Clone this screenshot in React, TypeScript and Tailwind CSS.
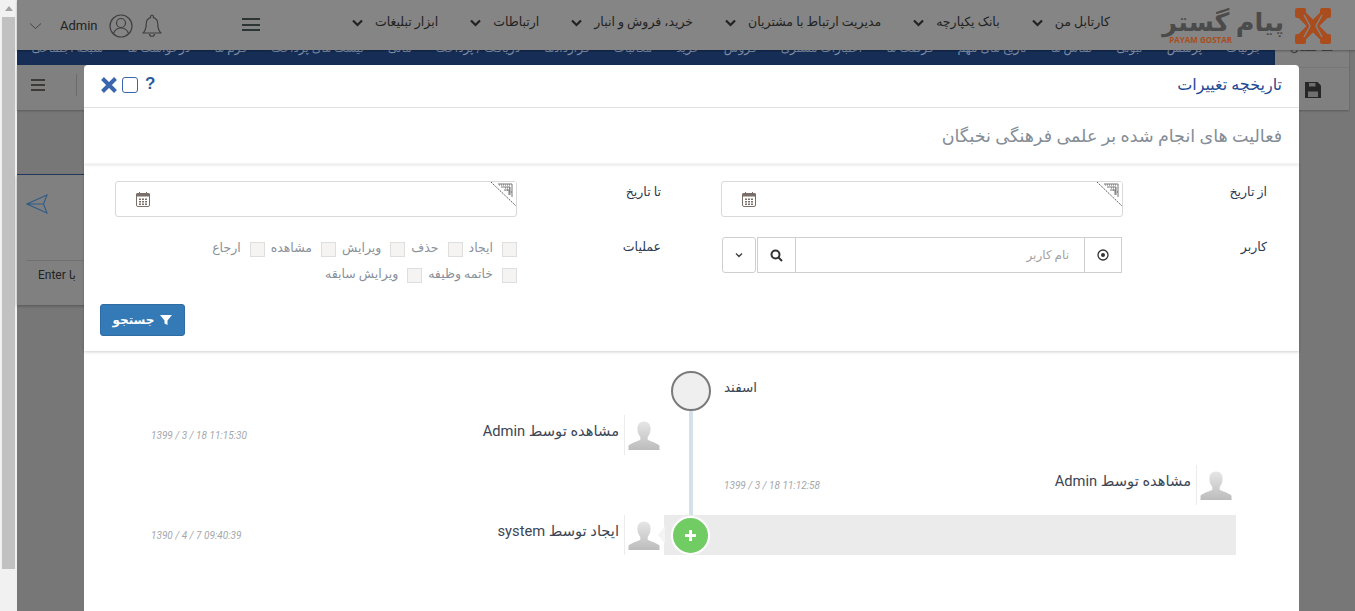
import React from "react";

const Chevron = ({ className = "" }: { className?: string }) => (
  <svg width="11" height="8" viewBox="0 0 11 8" className={className} fill="none" stroke="#222" strokeWidth="2.2">
    <path d="M1 1.500 5.500 6 10 1.500" />
  </svg>
);

const Logo = () => (
  <div className="flex items-start w-[172px] h-[40px] mr-[21px] mt-[5px] shrink-0">
    <div className="flex flex-col items-end w-[122px] leading-none text-[#4b4b4b]">
      <span dir="rtl" className="font-bold text-[25.5px] leading-[28px] whitespace-nowrap">پیام گستر</span>
      <span className="text-[#a94d1f] font-bold text-[8px] leading-[9px] mr-[52px] -mt-[1px] font-['Open_Sans',sans-serif] whitespace-nowrap">PAYAM GOSTAR</span>
    </div>
    <svg width="36" height="36" viewBox="0 0 36 36" className="ml-[11px]" fill="none">
      <path d="M5 5 31 31M31 5 5 31" stroke="#a94d1f" strokeWidth="9" />
      <rect x="0" y="0" width="11" height="10" rx="2" fill="#a94d1f" />
      <rect x="25" y="0" width="11" height="10" rx="2" fill="#a94d1f" />
      <rect x="0" y="26" width="11" height="10" rx="2" fill="#a94d1f" />
      <rect x="25" y="26" width="11" height="10" rx="2" fill="#a94d1f" />
      <path d="M9 7 15 18 9 29M27 7 21 18 27 29" stroke="#858585" strokeWidth="1.400" />
    </svg>
  </div>
);

const Header = () => (
  <header className="h-[50px] flex items-center bg-[#858585] relative z-10 shadow-[0_1px_2px_rgba(0,0,0,0.3)]">
    <div className="flex items-center w-[145px] pl-[12px] pt-[1px] shrink-0">
      <svg width="13" height="8" viewBox="0 0 13 8" fill="none" stroke="#444" strokeWidth="1">
        <path d="M1 1.500 6.500 6.500 12 1.500" />
      </svg>
      <span className="ml-[18px] text-[13px] text-[#222] w-[49px]">Admin</span>
      <svg width="24" height="26" viewBox="0 0 24 26" fill="none" stroke="#3f3f3f" strokeWidth="1.200">
        <circle cx="12" cy="13" r="11" />
        <circle cx="12" cy="10" r="4.500" />
        <path d="M4.500 20.500c1.500-4 4.500-5.500 7.500-5.500s6 1.500 7.500 5.500" />
      </svg>
      <svg width="20" height="26" viewBox="0 0 20 26" className="ml-[9px]" fill="none" stroke="#3f3f3f" strokeWidth="1.200">
        <path d="M10 2c.9 0 1.400.6 1.400 1.400v1.200c3 .8 4.400 3.300 4.400 6.400 0 4.500.8 6.500 3 9H1.200c2.200-2.500 3-4.500 3-9 0-3.100 1.400-5.600 4.400-6.400V3.400C8.600 2.600 9.100 2 10 2Z" />
        <path d="M7.500 21c0 3 5 3 5 0" />
      </svg>
    </div>
    <div className="w-[18px] ml-[80px] flex flex-col gap-[3.5px] -mt-[1px] shrink-0">
      <span className="h-[2px] bg-[#2c3533]" /><span className="h-[2px] bg-[#2c3533]" /><span className="h-[2px] bg-[#2c3533]" />
    </div>
    <nav className="flex-1 flex justify-end items-center gap-[32px] -mt-[5px] text-[#222] text-[12.5px] pr-[52px]">
      {["ابزار تبلیغات", "ارتباطات", "خرید، فروش و انبار", "مدیریت ارتباط با مشتریان", "بانک یکپارچه", "کارتابل من"].map((t) => (
        <div key={t} className="flex items-center gap-[12px] whitespace-nowrap">
          <Chevron />
          <span dir="rtl">{t}</span>
        </div>
      ))}
    </nav>
    <Logo />
  </header>
);

const BlueTabs = () => (
  <div className="h-[15px] overflow-hidden bg-[#162d55] flex justify-end pr-[13px]" dir="ltr">
    <div dir="rtl" className="flex gap-[24px] -mt-[11px] text-[12px] text-[#7f8ea8] whitespace-nowrap">
      {["جزئیات", "پرسش", "ثبوتی", "تماس ها", "تاریخ های مهم", "فرصت ها", "اعتبارات مشتری", "فروش", "خرید", "مکاتبات", "قراردادها", "دریافت / پرداخت", "مالی", "لیست های پرداخت", "فرم ها", "درخواست ها", "شبکه اجتماعی"].map((t) => (
        <span key={t}>{t}</span>
      ))}
    </div>
  </div>
);

const BackPage = () => (
  <div className="flex-1 flex min-h-0 bg-[#777]">
    <div className="flex-1 flex flex-col min-w-0">
      <BlueTabs />
      <div className="h-[45px] bg-[#808080] shadow-[0_1px_2px_rgba(0,0,0,0.25)] flex items-center pl-[14px]">
        <div className="w-[14px] flex flex-col gap-[3px] mb-[5px]">
          <span className="h-[2px] bg-[#3d3a38]" /><span className="h-[2px] bg-[#3d3a38]" /><span className="h-[2px] bg-[#3d3a38]" />
        </div>
        <span className="ml-[31px] w-px h-[22px] bg-[#6a6a6a] mb-[5px]" />
      </div>
      <div className="h-[65px] border-b border-[#233a60]" />
      <div className="h-[130px] bg-[#808080] shadow-[0_1px_3px_rgba(0,0,0,0.3)] pl-[9px]">
        <svg width="22" height="22" viewBox="0 0 22 22" className="mt-[18px]" fill="none" stroke="#2f5c87" strokeWidth="1.100">
          <path d="M21 2 1 11l20 9-3.500-9ZM1 11h16.500" />
        </svg>
        <div className="mt-[45px] border-t border-[#717171] pt-[5px] pl-[12px] text-[12px] text-[#222] whitespace-nowrap">Enter <span dir="rtl">با</span></div>
      </div>
    </div>
    <div className="w-[80px] pr-[6px]">
      <div className="h-[60px] bg-[#808080] shadow-[0_1px_2px_rgba(0,0,0,0.25)]">
        <div className="h-[18px] border-b border-[#767676] overflow-hidden flex justify-center">
          <span dir="rtl" className="-mt-[12px] text-[12px] text-[#444] whitespace-nowrap">ساختمان</span>
        </div>
        <svg width="16" height="16" viewBox="0 0 16 16" className="ml-[30px] mt-[14px]" fill="#262626">
          <path d="M0 0h12.500L16 3.500V16H0Z" />
          <path d="M3 9.500h10V15H3ZM4 1h6.500v3.500H4Z" fill="#6f6f6f" />
        </svg>
      </div>
    </div>
  </div>
);

const CalendarIcon = () => (
  <svg width="14" height="15" viewBox="0 0 14 15" fill="none">
    <rect x="0.500" y="1.500" width="13" height="13" rx="1.500" stroke="#7a6e69" />
    <rect x="0" y="1.500" width="14" height="3" fill="#7a6e69" />
    <path d="M3.500 0v3M10.500 0v3" stroke="#7a6e69" />
    <path d="M3 6.500h2v1.500H3zM6 6.500h2v1.500H6zM9 6.500h2v1.500H9zM3 9h2v1.500H3zM6 9h2v1.500H6zM9 9h2v1.500H9zM3 11.500h2V13H3zM6 11.500h2V13H6zM9 11.500h2V13H9z" fill="#7a6e69" />
  </svg>
);

const DateInput = () => (
  <div className="relative w-[402px] h-[36px] border border-[#d9d9d9] rounded-[3px] flex items-center pl-[20px] bg-white shrink-0">
    <CalendarIcon />
    <svg width="25" height="24" viewBox="0 0 25 24" className="absolute top-0 right-0" fill="none">
      <path d="M0 0h25v24Z" fill="#fff" />
      <path d="M0 0 25 24" stroke="#222" strokeWidth="0.800" strokeDasharray="1.500 1" />
      <path d="M7 2h14v13M10 5h9v8M13 8h5v5" stroke="#777" strokeWidth="1" />
      <path d="M8 3h12M14 6h6M16 8h4M18 10h3" stroke="#666" strokeWidth="1" strokeDasharray="1 1" />
    </svg>
  </div>
);

const Check = ({ label }: { label: string }) => (
  <label className="flex items-center gap-[9px] whitespace-nowrap h-[15px]">
    <span className="w-[15px] h-[15px] border border-[#dedede] bg-[#f6f3f3] shrink-0" />
    <span className="-mt-[3px]">{label}</span>
  </label>
);

const Avatar = () => (
  <svg width="32" height="33" viewBox="0 0 33 33" className="shrink-0">
    <defs>
      <linearGradient id="av" x1="0" y1="0" x2="0" y2="1">
        <stop offset="0" stopColor="#e6e6e6" />
        <stop offset="1" stopColor="#bcbcbc" />
      </linearGradient>
    </defs>
    <path d="M16.500 2c4.500 0 6.800 3 6.800 7.500 0 3.500-1.300 6.500-3 8.500v3c2 1.500 9 3 12.200 6v4.500H.500V27c3.200-3 10.200-4.500 12.200-6v-3c-1.700-2-3-5-3-8.500C9.700 5 12 2 16.500 2Z" fill="url(#av)" />
  </svg>
);

const Event = ({ text, time, side }: { text: string; time: string; side: "left" | "right" }) => (
  <div className={`h-[40px] flex items-center justify-between ${side === "left" ? "pl-[67px] pr-[31px]" : "pl-[33px] pr-[67px]"}`}>
    <span className="text-[10px] italic text-[#a3a8ae] font-['Roboto',sans-serif] whitespace-nowrap">{time}</span>
    <div className="flex items-center h-full">
      <span dir="rtl" className="text-[14.7px] text-[#3c4654] -mt-[7px] whitespace-nowrap">{text}</span>
      <span className="w-px h-full bg-[#ececec] ml-[5px] mr-[3px]" />
      <Avatar />
    </div>
  </div>
);

const Modal = () => (
  <div className="absolute left-[84px] top-[65px] w-[1215px] h-[546px] bg-white rounded-t-[4px] flex flex-col z-20">
    <div className="h-[43px] shrink-0 border-b border-[#e5e5e5] flex items-center justify-between pl-[16px] pr-[17px]">
      <div className="flex items-center -mt-[2px]">
        <svg width="18" height="18" viewBox="0 0 18 18" stroke="#3a66ad" strokeWidth="4" fill="none">
          <path d="M2.500 2.500 15.500 15.500M15.500 2.500 2.500 15.500" />
        </svg>
        <span className="ml-[4px] w-[16px] h-[16px] border-[1.5px] border-[#3a66ad] rounded-[3px]" />
        <span className="ml-[7px] -mt-[2px] text-[#2b5a9f] font-bold text-[17px] font-['Liberation_Sans',sans-serif]">?</span>
      </div>
      <span dir="rtl" className="text-[16px] text-[#1f4b93] -mt-[3px]">تاریخچه تغییرات</span>
    </div>
    <div className="h-[56px] shrink-0 flex items-center justify-end pr-[17px] shadow-[0_1px_3px_rgba(0,0,0,0.12)]">
      <span dir="rtl" className="text-[17.5px] text-[#858d96] mt-[1px]">فعالیت های انجام شده بر علمی فرهنگی نخبگان</span>
    </div>
    <div className="h-[187px] shrink-0 shadow-[0_1px_3px_rgba(0,0,0,0.2)] relative pt-[17px]">
      <div className="flex">
        <div className="w-[607px] flex pl-[31px] pr-[30px]">
          <DateInput />
          <div dir="rtl" className="flex-1 text-[12.5px] text-[#2a3a52] pt-[2px]">تا تاریخ</div>
        </div>
        <div className="flex-1 flex pl-[30px] pr-[32px]">
          <DateInput />
          <div dir="rtl" className="flex-1 text-[12.5px] text-[#2a3a52] pt-[2px]">از تاریخ</div>
        </div>
      </div>
      <div className="flex mt-[20px]">
        <div className="w-[607px] flex pl-[31px] pr-[30px]">
          <div dir="rtl" className="w-[402px] shrink-0 flex flex-col gap-[11px] pt-[5px] text-[12.5px] text-[#8a919a]">
            <div className="flex gap-[6px]">
              {["ایجاد", "حذف", "ویرایش", "مشاهده", "ارجاع"].map((l) => <Check key={l} label={l} />)}
            </div>
            <div className="flex gap-[6px]">
              {["خاتمه وظیفه", "ویرایش سابقه"].map((l) => <Check key={l} label={l} />)}
            </div>
          </div>
          <div dir="rtl" className="flex-1 text-[12.5px] text-[#2a3a52] pt-[1px]">عملیات</div>
        </div>
        <div className="flex-1 flex pl-[31px] pr-[32px]">
          <div className="w-[400px] h-[36px] flex items-stretch shrink-0">
            <div className="w-[34px] border border-[#cfcfcf] rounded-[3px] flex items-center justify-center">
              <svg width="8" height="6" viewBox="0 0 8 6" fill="none" stroke="#444" strokeWidth="1.400"><path d="M1 1.500 4 4.500 7 1.500" /></svg>
            </div>
            <div className="ml-[1px] w-[39px] border border-[#cfcfcf] flex items-center justify-center">
              <svg width="13" height="13" viewBox="0 0 13 13" fill="none" stroke="#333" strokeWidth="2"><circle cx="5.500" cy="5.500" r="4" /><path d="m8.500 8.500 3.500 3.500" /></svg>
            </div>
            <div dir="rtl" className="flex-1 border-y border-[#cfcfcf] flex items-center pr-[15px] text-[12px] text-[#a3a3a3]">نام کاربر</div>
            <div className="w-[38px] border border-[#cfcfcf] flex items-center justify-center">
              <svg width="12" height="12" viewBox="0 0 12 12" fill="none"><circle cx="6" cy="6" r="5" stroke="#333" strokeWidth="1.300" /><circle cx="6" cy="6" r="2" fill="#333" /></svg>
            </div>
          </div>
          <div dir="rtl" className="flex-1 text-[12.5px] text-[#2a3a52] pt-[1px]">کاربر</div>
        </div>
      </div>
      <button className="absolute left-[16px] top-[140px] w-[85px] h-[32px] bg-[#337ab7] border border-[#2e6da4] rounded-[3px] flex items-center justify-center gap-[6px] text-white text-[12px] font-bold">
        <span dir="rtl">جستجو</span>
        <svg width="12" height="12" viewBox="0 0 12 12" fill="#fff"><path d="M0 1h12L7.500 6.500V11l-3-1.500v-3Z" /></svg>
      </button>
    </div>
    <div className="relative flex-1 pt-[20px]">
      <span className="absolute left-[605px] top-[60px] h-[110px] w-[4px] bg-[#d4e0ea]" />
      <div className="relative h-[40px] flex items-center">
        <span className="ml-[587px] w-[40px] h-[40px] rounded-full bg-[#efefef] border-2 border-[#7a7a7a]" />
        <span dir="rtl" className="ml-[13px] text-[13.5px] text-[#3c4654] -mt-[8px]">اسفند</span>
      </div>
      <div className="relative w-[607px] mt-[4px]"><Event side="left" text="مشاهده توسط Admin" time="1399 / 3 / 18 11:15:30" /></div>
      <div className="relative ml-[607px] mt-[10px]"><Event side="right" text="مشاهده توسط Admin" time="1399 / 3 / 18 11:12:58" /></div>
      <div className="relative mt-[10px] flex">
        <div className="w-[607px]"><Event side="left" text="ایجاد توسط system" time="1390 / 4 / 7 09:40:39" /></div>
        <div className="absolute left-[580px] top-0 h-[40px] w-[572px] bg-[#ebebeb]" />
        <span className="absolute left-[574px] top-[11px] w-0 h-0 border-y-[9px] border-y-transparent border-r-[7px] border-r-[#f4f4f4]" />
        <span className="absolute left-[587px] top-[1px] w-[39px] h-[39px] rounded-full bg-[#72cc64] border-2 border-white flex items-center justify-center">
          <svg width="11" height="11" viewBox="0 0 11 11" fill="#fff"><path d="M4 0h3v4h4v3H7v4H4V7H0V4h4Z" /></svg>
        </span>
      </div>
    </div>
  </div>
);

export default function App() {
  return (
    <div dir="ltr" className="relative h-[611px] w-full overflow-hidden flex font-[Roboto,'DejaVu_Sans',sans-serif] bg-[#777]">
      <div className="w-[17px] shrink-0 bg-[#f1f1f1] pl-[2px] pr-[2px] flex flex-col">
        <div className="h-[17px] flex items-center justify-center">
          <span className="w-0 h-0 border-x-[4px] border-x-transparent border-b-[5px] border-b-[#a3a3a3]" />
        </div>
        <div className="h-[552px] bg-[#c1c1c1]" />
      </div>
      <div className="flex-1 min-w-0 flex flex-col">
        <Header />
        <BackPage />
      </div>
      <Modal />
    </div>
  );
}
